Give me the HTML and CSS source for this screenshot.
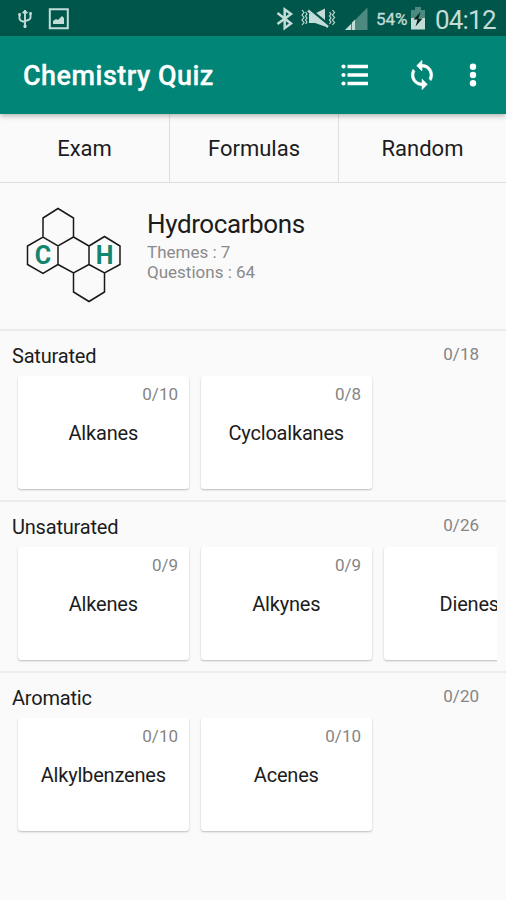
FILE: index.html
```html
<!DOCTYPE html>
<html lang="en">
<head>
<meta charset="utf-8">
<title>Chemistry Quiz</title>
<link rel="stylesheet" href="styles.css">
</head>
<body>
<div class="status">
  <svg class="usb" width="16" height="24" viewBox="17 7 16 24" fill="none" stroke="#c3dcd7" stroke-width="1.9"><path d="M25 11v15M19.500 15v3.500q0 2.500 5.500 3.500M30.500 14v3.500q0 2.500-5.500 3.500"/><path d="M22.500 13L25 10l2.500 3zM18.800 13.500h1.500v2h-1.500zM29.800 12.500h1.500v2h-1.500zM24 25h2v2.500h-2z" fill="#c3dcd7" stroke-width="1"/></svg>
  <svg class="image" width="22" height="24" viewBox="48 7 22 24"><path d="M49.800 9.300h18v19h-18z" fill="none" stroke="#c3dcd7" stroke-width="2"/><path d="M53 24v-3l3-2 2 1 4-4 2 2v6z" fill="#c3dcd7"/></svg>
  <span class="spacer"></span>
  <svg class="bt" width="18" height="24" viewBox="276 7 18 24"><path d="M277.500 13l13.500 10.500-6.300 4.500V9.500l6.300 4.500-13.500 10" fill="none" stroke="#c3dcd7" stroke-width="2.500"/></svg>
  <svg class="mute" width="36" height="24" viewBox="300 7 36 24"><path d="M309 13.500h6l10-5v18L315 23h-6z" fill="#c3dcd7"/><path d="M309 9l19 15.500" stroke="#00564a" stroke-width="3"/><path d="M308 10.500l20 16.500" stroke="#c3dcd7" stroke-width="2.400"/><path d="M302 10l2 2.500-2 2.500 2 2.500-2 2.500 2 2.500-2 2.500M305.500 12l1.500 2-1.500 2 1.500 2-1.500 2 1.500 2-1.500 2M329.500 12l1.500 2-1.500 2 1.500 2-1.500 2 1.500 2-1.500 2M332.500 10l2 2.500-2 2.500 2 2.500-2 2.500 2 2.500-2 2.500" fill="none" stroke="#c3dcd7" stroke-width="1.200"/></svg>
  <svg class="signal" width="24" height="24" viewBox="344 7 24 24"><path d="M345 30L367.500 7.500V30z" fill="#4c897f"/><path d="M345 30l6-6v6zM352 30v-7.500l3-3V30z" fill="#c3dcd7"/></svg>
  <span class="percent">54%</span>
  <svg class="battery" width="16" height="24" viewBox="410 7 16 24"><path d="M415 7h6v3h4v8h-14v-8h4z" fill="#4c897f"/><path d="M411 18h14v11.500h-14z" fill="#c3dcd7"/><path d="M420.500 12l-7 7.500h4l-2 7 7-8h-4z" fill="#082822"/></svg>
  <span class="clock">04:12</span>
</div>
<header class="appbar">
  <h1>Chemistry Quiz</h1>
  <svg class="list" width="28" height="24" viewBox="341 63 28 24" fill="#fff"><circle cx="343.500" cy="66.500" r="2.100"/><circle cx="343.500" cy="75" r="2.100"/><circle cx="343.500" cy="83.500" r="2.100"/><path d="M347.500 64.700H368v3.600h-20.500zM347.500 73.200H368v3.600h-20.500zM347.500 81.700H368v3.600h-20.500z"/></svg>
  <svg class="sync" width="32" height="32" viewBox="0 0 24 24" fill="#fff" stroke="#fff" stroke-width=".4"><path d="M12 4V1L8 5l4 4V6c3.310 0 6 2.690 6 6 0 1.010-.25 1.970-.7 2.800l1.460 1.460C19.540 15.030 20 13.570 20 12c0-4.420-3.580-8-8-8zm0 14c-3.310 0-6-2.690-6-6 0-1.010.25-1.970.7-2.800L5.240 7.740C4.460 8.970 4 10.430 4 12c0 4.420 3.580 8 8 8v3l4-4-4-4v3z"/></svg>
  <svg class="more" width="8" height="26" viewBox="469 62 8 26" fill="#fff"><circle cx="473" cy="66.700" r="3.200"/><circle cx="473" cy="75" r="3.200"/><circle cx="473" cy="83.300" r="3.200"/></svg>
</header>
<nav class="tabs"><span>Exam</span><span>Formulas</span><span>Random</span></nav>
<section class="topic">
  <svg width="100" height="100" viewBox="24 206 100 100"><path d="M43 237V218L58 208.500 73.500 218V237L58 246 43 237 27.500 246V264.500L43 273.500 58 264.500V246M73.500 237L89 246V264.500L73.500 273 58 264.500M89 246L104.500 236.500 120 246V264.500L104.500 273 89 264.500M104.500 273V292L89 301.500 73.500 292V273" fill="none" stroke="#181818" stroke-width="1.500"/><g class="atom"><text x="43" y="264" text-anchor="middle">C</text><text x="104.500" y="264" text-anchor="middle">H</text></g></svg>
  <div class="info"><h2>Hydrocarbons</h2><p>Themes : 7</p><p>Questions : 64</p></div>
</section>
<section class="group">
  <div class="head"><h3>Saturated</h3><span class="count">0/18</span></div>
  <div class="cards">
    <div class="card"><span class="count">0/10</span><b>Alkanes</b></div>
    <div class="card"><span class="count">0/8</span><b>Cycloalkanes</b></div>
  </div>
</section>
<section class="group">
  <div class="head"><h3>Unsaturated</h3><span class="count">0/26</span></div>
  <div class="cards">
    <div class="card"><span class="count">0/9</span><b>Alkenes</b></div>
    <div class="card"><span class="count">0/9</span><b>Alkynes</b></div>
    <div class="card"><b class="solo">Dienes</b></div>
  </div>
</section>
<section class="group">
  <div class="head"><h3>Aromatic</h3><span class="count">0/20</span></div>
  <div class="cards">
    <div class="card"><span class="count">0/10</span><b>Alkylbenzenes</b></div>
    <div class="card"><span class="count">0/10</span><b>Acenes</b></div>
  </div>
</section>
</body>
</html>
```
FILE: styles.css
```css
* { box-sizing: border-box; margin: 0; }
body { width: 506px; height: 900px; overflow: hidden; background: #fafafa; color: #1c1c1c; font-family: Roboto, sans-serif; }
svg { display: block; flex: none; }
.status { height: 36px; padding: 7px 10px 0 17px; display: flex; background: #00564a; color: #c3dcd7; }
.image { margin-left: 15px; }
.spacer { flex: 1; }
.mute { margin-left: 6px; }
.signal { margin-left: 8px; }
.percent { width: 34px; margin-left: 8px; font-size: 17px; line-height: 25px; white-space: nowrap; -webkit-text-stroke: .3px #c3dcd7; }
.clock { width: 61px; margin-left: 9px; font-size: 26px; line-height: 26px; letter-spacing: -.8px; white-space: nowrap; }
.appbar { position: relative; height: 78px; padding: 0 29px 0 23px; display: flex; align-items: center; background: #008577; color: #fff; box-shadow: 0 2px 5px rgba(0,0,0,.28); }
h1 { flex: 1; font-size: 27px; font-weight: 500; line-height: 32px; padding-top: 2px; letter-spacing: .48px; -webkit-text-stroke: .3px #fff; }
.sync { margin-left: 37px; }
.more { margin-left: 31px; }
.tabs { height: 69px; display: grid; grid-template-columns: 170px 169px 167px; border-bottom: 1px solid #dedede; }
.tabs span { font-size: 22px; line-height: 70px; text-align: center; border-right: 1px solid #dedede; }
.tabs span { height: 68px; }
.tabs span:last-child { border-right: 0; }
.topic { height: 146px; padding: 23px 0 0 24px; display: flex; gap: 23px; }
.atom { font: 700 25px Roboto, sans-serif; fill: #128472; }
.info { padding-top: 1px; }
h2 { font-size: 26px; font-weight: 400; line-height: 34px; letter-spacing: -.4px; margin-bottom: 1px; }
.info p { font-size: 17px; line-height: 20px; color: #8a8a8a; }
.group { height: 171px; border-top: 2px solid #ececec; }
.head { height: 45px; padding: 12px 27px 0 12px; display: flex; justify-content: space-between; }
h3 { font-size: 20px; font-weight: 400; line-height: 26px; letter-spacing: -.2px; }
.count { font-size: 17px; line-height: 22px; color: #858585; }
.cards { width: 497px; height: 118px; padding: 0 0 0 17.5px; display: flex; gap: 11.5px; overflow: hidden; }
.card { flex: none; width: 171.5px; height: 113px; padding: 7px 11px 0 0; display: flex; flex-direction: column; background: #fff; border-radius: 3px; box-shadow: 0 1px 2px rgba(0,0,0,.25); }
.card .count { align-self: flex-end; }
.card b { margin: 14px -11px 0 0; font-size: 20px; font-weight: 400; line-height: 29px; letter-spacing: -.2px; text-align: center; }
.card .solo { margin-top: 36px; }
```
